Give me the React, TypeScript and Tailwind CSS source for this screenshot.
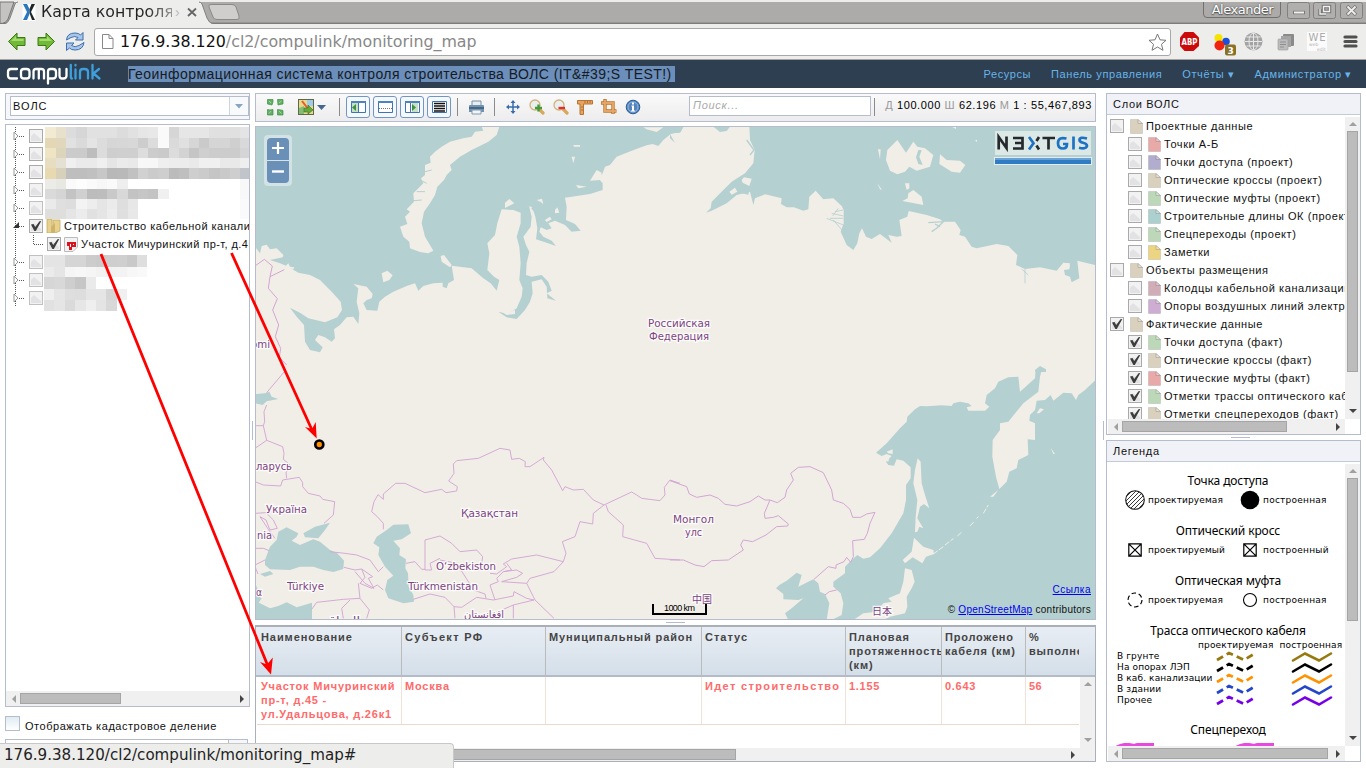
import React from "react";

const UI = "font-['Liberation_Sans',sans-serif]";

/* ---------- small shared parts ---------- */

function Check({ on, faint }: { on?: boolean; faint?: boolean }) {
  return (
    <svg className="shrink-0" width="14" height="14" viewBox="0 0 14 14">
      <rect x=".5" y=".5" width="13" height="13" fill="#f2f2f2" stroke={faint ? "#c0c0c0" : "#a9a9a9"} />
      <path d="M2 12V7L5 4L12 10V12Z" fill="#e2e2e4" />
      {on && <path d="M2 5.500L4.500 5L6.200 8L10.500 2.300L12.300 2L6.800 12H5.400Z" fill="#3c3c3c" />}
    </svg>
  );
}

function FileIcon({ color }: { color: string }) {
  return (
    <svg className="shrink-0" width="13" height="15" viewBox="0 0 13 15">
      <path d="M.5 .5H8L12.500 4.500V14.500H.5Z" fill={color} stroke="#000" strokeOpacity=".1" />
      <path d="M8 .5V4.500H12.500Z" fill="#fff" fillOpacity=".35" stroke="#000" strokeOpacity=".15" />
    </svg>
  );
}

function Tri({ dir, dark }: { dir: "u" | "d" | "l" | "r"; dark?: boolean }) {
  const d = { u: "M0 5L4 1L8 5Z", d: "M0 2L4 6L8 2Z", l: "M6 0V8L2 4Z", r: "M2 0V8L6 4Z" }[dir];
  return (
    <svg className="shrink-0" width="8" height="8" viewBox="0 0 8 8">
      <path d={d} fill={dark ? "#444" : "#a0a0a0"} />
    </svg>
  );
}

/* ---------- browser chrome ---------- */

function TabStrip() {
  return (
    <div className="relative h-6 shrink-0">
      <svg className="absolute inset-0" width="1366" height="24">
        <rect width="1366" height="24" fill="#ededeb" />
        <rect y="2" width="1366" height="21" fill="#acaba9" />
        <rect y="22" width="1366" height="1" fill="#979694" />
        <rect y="23" width="1366" height="1" fill="#7d7c7a" />
        <path d="M0 2H14L8 19Q6 23.500 0 23.500Z" fill="#c4c3c1" stroke="#777" />
        <path d="M5 24Q8 23 10 18L15 4Q16 2 18 2H199Q201 2 202 4L207 18Q209 23 213 24Z" fill="#ededeb" />
        <path d="M5 24Q8 23 10 18L15 4Q16 2 18 2M199 2Q201 2 202 4L207 18Q209 23 213 24" fill="none" stroke="#838280" />
        <path d="M211 4.500H232Q235 4.500 236 7L239 16Q240 19.500 237 19.500H217Q214 19.500 213 17L209 7Q208 4.500 211 4.500Z" fill="#cfcecd" stroke="#8a8987" />
        <rect x="22.500" y="4" width="13" height="17" fill="#fff" />
        <path d="M23 4H27L29.500 9V14L27 20H23L27 12Z" fill="#2878c0" />
        <path d="M35 4H31.500L29.500 9V13L32 20H35L31 12Z" fill="#20252a" />
        <path d="M188 8.500L196 16M196 8.500L188 16" stroke="#666" strokeWidth="1.800" />
        <path d="M1203.500 2V14Q1203.500 17.500 1207 17.500H1277Q1280.500 17.500 1280.500 14V2" fill="none" stroke="#72716f" />
        <g fill="#b0afad" stroke="#81807e">
          <rect x="1287.500" y="2.500" width="22" height="16" rx="2" />
          <rect x="1313.500" y="2.500" width="22" height="16" rx="2" />
          <rect x="1340.500" y="2.500" width="22" height="16" rx="2" />
        </g>
        <g fill="none" stroke="#777" strokeWidth="3.500">
          <path d="M1293 12.500H1305M1347 6L1356 15M1356 6L1347 15" />
          <path d="M1320 9V14H1326M1323.500 6.500H1329.500V11.500H1323.500Z" />
        </g>
        <g fill="none" stroke="#f0efed" strokeWidth="1.800">
          <path d="M1294 12.500H1304M1347.500 6.500L1355.500 14.500M1355.500 6.500L1347.500 14.500" />
          <path strokeWidth="1.300" d="M1320 9V14H1326M1323.500 6.500H1329.500V11.500H1323.500Z" />
        </g>
      </svg>
      <div className="relative flex h-6 items-center pl-[41px]">
        <span className="w-[131px] overflow-hidden whitespace-nowrap bg-gradient-to-r from-[#222] from-80% to-[#999] bg-clip-text font-['DejaVu_Sans',sans-serif] text-[15.800px] leading-[22px] text-transparent">Карта контроля</span>
        <span className="ml-[3px] text-[14px] leading-[20px] text-[#bbb]">›</span>
        <span className="ml-auto mr-[93px] pb-1 font-['DejaVu_Sans',sans-serif] text-[13px] tracking-[-0.5px] text-white [text-shadow:0_0_2px_#444,0_1px_1px_#555]">Alexander</span>
      </div>
    </div>
  );
}

function AddressBar() {
  return (
    <div className="flex h-9 shrink-0 items-center border-b border-[#a3a3a3] bg-[#ededeb]">
      <svg className="shrink-0" width="94" height="35" viewBox="0 24 94 35">
        <g stroke="#3a7a10" strokeLinejoin="round" fill="#72b93a">
          <path d="M8.500 41.500L17 33V37.500H25V45.500H17V50Z" />
          <path d="M54.500 41.500L46 33V37.500H38V45.500H46V50Z" />
        </g>
        <path d="M11 41L16 36V39H23.500V41Z M52 41L47 36V39H39.500V41Z" fill="#a3dc6c" />
        <g fill="#a9c6e8" stroke="#3d6fae" strokeLinejoin="round">
          <path d="M66.500 40Q67 33 75 33Q79 33 80.500 35L83 32.500V40H75.500L78 37.500Q75 35.500 71 37.500Z" />
          <path d="M84 42.500Q83 50 75 50Q71 50 69.500 48L66.500 50.500V43H74L71.500 45.500Q75 48 79 45.500Z" />
        </g>
      </svg>
      <div className="flex h-[28px] w-[1077px] shrink-0 items-center rounded-[3px] border border-[#a8a8a8] bg-white pl-[7px]">
        <svg width="12" height="15" viewBox="0 0 12 15"><path d="M.5.5H7L11 4.500V14.500H.5ZM7 .5V4.500H11" fill="#fff" stroke="#888" /></svg>
        <span className="ml-[6px] font-['DejaVu_Sans',sans-serif] text-[15.850px] leading-[20px] text-[#888]"><span className="text-[#111]">176.9.38.120</span>/cl2/compulink/monitoring_map</span>
        <svg className="ml-auto mr-[3px]" width="19" height="18" viewBox="0 0 19 18"><path d="M9.500 1L12 6.800L18 7.300L13.500 11.300L15 17.300L9.500 14L4 17.300L5.500 11.300L1 7.300L7 6.800Z" fill="#fff" stroke="#777" /></svg>
      </div>
      <svg className="shrink-0" width="195" height="35" viewBox="1171 24 195 35">
        <path d="M1184.500 32H1193.500L1199 37.500V46L1193.500 51H1184.500L1180 46V37.500Z" fill="#cc0a0a" />
        <text x="1181.500" y="45.200" fontFamily="DejaVu Sans" fontSize="9" fontWeight="700" fill="#fff" textLength="16" lengthAdjust="spacingAndGlyphs">ABP</text>
        <circle cx="1226" cy="41.500" r="3.800" fill="#1d50d8" />
        <circle cx="1218.500" cy="38" r="4" fill="#f4e400" />
        <circle cx="1219.500" cy="45.500" r="5" fill="#ee2310" />
        <rect x="1225" y="44.500" width="11" height="11" rx="2" fill="#8a7128" />
        <text x="1227.500" y="53.500" fontFamily="DejaVu Sans" fontSize="9" fontWeight="700" fill="#fff">3</text>
        <circle cx="1253.500" cy="41.500" r="9" fill="#a3a3a3" />
        <g fill="none" stroke="#e8e8e8"><path d="M1253.500 33V50M1245 41.500H1262M1246.500 37H1260.500M1246.500 46H1260.500" /><ellipse cx="1253.500" cy="41.500" rx="4.500" ry="8.500" /></g>
        <rect x="1283" y="34" width="11" height="12" rx="1" fill="#8a8a8a" /><rect x="1281" y="36" width="10" height="11" fill="#a5a5a5" /><rect x="1278" y="39" width="10" height="11" rx="1" fill="#bcbcbc" stroke="#999" strokeWidth=".6" /><path d="M1280 42H1286M1280 44.500H1286M1280 47H1284" stroke="#8f8f8f" />
        <rect x="1307" y="32" width="20" height="19" fill="#fbfbfb" />
        <text x="1308.500" y="41" fontFamily="DejaVu Sans" fontSize="10" fill="#aaa" textLength="17">WE</text>
        <text x="1309" y="46" fontFamily="DejaVu Sans" fontSize="4.500" fill="#b3b3b3">web</text>
        <text x="1317" y="50.500" fontFamily="DejaVu Sans" fontSize="4.500" fill="#b3b3b3">edit</text>
        <path d="M1345 37H1356M1345 41.500H1356M1345 46H1356" stroke="#505050" strokeWidth="3.200" strokeLinecap="round" />
      </svg>
    </div>
  );
}

function AppHeader() {
  return (
    <div className="flex h-7 shrink-0 items-center bg-[#2e3f52] text-[#68b4e8]">
      <svg className="shrink-0" width="122" height="28" viewBox="0 0 122 28" fill="none" strokeWidth="2.300" strokeLinecap="round" strokeLinejoin="round">
        <g stroke="#fff">
          <path d="M17 9H11Q8 9 8 12V15.500Q8 18.500 11 18.500H17" />
          <rect x="21" y="9" width="8.500" height="9.500" rx="2.800" />
          <path d="M33.500 18.500V11.500Q33.500 9 36 9H41.500Q44 9 44 11.500V18.500M38.800 9.500V18.500" />
          <path d="M48 23.500V11.500Q48 9 50.500 9H53Q56 9 56 12V15.500Q56 18.500 53 18.500H49" />
          <path d="M59.500 9V15.500Q59.500 18.500 62 18.500H63.500Q66.500 18.500 66.500 15.500V9" />
        </g>
        <g stroke="#3e9fdb">
          <path d="M70.800 5V16.500Q70.800 18.500 72 18.500M75.500 9.500V18.500M75.500 5V5.500M80 18.500V12Q80 9 83 9H84.500Q88 9 88 12V18.500M92.500 5V18.500M99 9L93.500 13.500L99.500 18.500" />
        </g>
      </svg>
      <span className={`${UI} ml-[6px] h-4 w-[547px] shrink-0 whitespace-nowrap bg-[#6b8eba] text-[14px] leading-4 tracking-[0.440px] text-[#161b22]`}>Геоинформационная система контроля строительства ВОЛС (IT&amp;#39;S TEST!)</span>
      <nav className={`${UI} ml-auto flex gap-5 whitespace-nowrap pr-[14px] text-[11px] tracking-[0.600px]`}>
        <span>Ресурсы</span>
        <span>Панель управления</span>
        <span>Отчёты ▾</span>
        <span>Администратор ▾</span>
      </nav>
    </div>
  );
}

/* ---------- left column ---------- */

const X1 = [135, 167, 197, 228, 260, 291, 320, 351, 383, 413, 444, 474, 506, 536, 566, 598, 628, 660, 690, 720, 750];
const Y1 = [20, 53, 83, 114, 144, 176, 206, 236, 267, 297];
const M1 = [
  "f3ead3 e6e0cd dcdcdc d6d6d6 e1e1e1 e1e1e1 e1e1e1 dcdcdc e1e1e1 e6e6e6 e8e8e8 fafafa d6d6d6 e6e6e6 e6e6e6 e6e6e6 e0e0e0 e0e0e0 e0e0e0 e4e4e4",
  "e3d7b5 e0d7bd e1e1e1 dadada e4e4e4 dcdcdc d6d6d6 d7d7d7 d8d8d8 cdcdcd dcdcdc fafafa dadada e0e0e0 d6d6d6 cacaca d5d5d5 d5d5d5 cfcfcf d9d9d9",
  "efe4c3 ddd4bc cbcbcb cbcbcb bdbdbd dcdcdc cecece cfcfcf cfcfcf dddddd cccccc cacaca dcdcdc d3d3d3 c5c5c5 cfcfcf cccccc cccccc cccccc d5d5d5",
  "e7dec2 e4e0d4 f0f0f0 eaeaea eaeaea efefef e5e5e5 ebebeb e9e9e9 f7f7f7 f7f7f7 efefef ececec ececec e9e9e9 f0f0f0 f0f0f0 e9e9e9 e9e9e9 eeeeee",
  "e8d9b0 d7d0bb bebebe bebebe c0c0c0 c7c7c7 b8b8b8 b9b9b9 c1c1c1 d1d1d1 cbcbcb cecece bbbbbb bfbfbf cecece cbcbcb c5c5c5 c9c9c9 cecece c1c5c9",
  "ebebe7 e8e8e3 fafafa fdfdfd fafafa f7f7f7 fafafa eeeeee ffffff ffffff ffffff ffffff ffffff ffffff ffffff ffffff ffffff ffffff ffffff f8f8f8",
  "dadada d5d5d5 c3c3c3 d0d0d0 bcbcbc bdbdbd c9c9c9 d8d8d8 c3c3c3 c6c6c6 c3c3c3 f0f0f0 ffffff ffffff ffffff ffffff ffffff ffffff ffffff f8f8f8",
  "eaeaea dfdfdf dddddd f3f3f3 ededed e5e5e5 ebebeb dedede e7e7e7 ffffff ffffff ffffff ffffff ffffff ffffff ffffff ffffff ffffff ffffff fafafa",
  "dededc dededc e5e5e5 ececec e1e1e1 e5e5e5 ededed dfdfdf e8e8e8 ffffff ffffff ffffff ffffff ffffff ffffff ffffff ffffff ffffff ffffff fafafa",
];
const X2 = [132, 163, 195, 226, 257, 288, 318, 350, 380, 411, 441];
const Y2 = [405, 440, 472, 506, 540, 572];
const M2 = [
  "e4e4e4 e4e4e4 d5d5d5 d5d5d5 cccccc cacaca cecece cfcfcf c9c9c9 dedede",
  "ebebeb e5e5e5 f5f5f5 f7f7f7 f5f5f5 f2f2f2 f2f2f2 f3f3f3 f7f7f7 f9f9f9",
  "d6d6d6 d8d8d8 cecece c6c6c6 eaeaea ffffff ffffff ffffff ffffff ffffff",
  "efefef e5e5e5 dedede dddddd e5e5e5 e5e5e5 d5d5d5 f0f0f0 ffffff ffffff",
  "e1e1e1 e5e5e5 dadada e6e6e6 efefef e4e4e4 d8d8d8 ffffff ffffff ffffff",
];

function Mosaic({ xs, ys, rows }: { xs: number[]; ys: number[]; rows: string[] }) {
  return (
    <g>
      {rows.map((r, j) => r.split(" ").map((c, i) => (
        <rect key={`${i}-${j}`} x={xs[i]} y={ys[j]} width={xs[i + 1] - xs[i]} height={ys[j + 1] - ys[j]} fill={`#${c}`} shapeRendering="crispEdges" />
      )))}
    </g>
  );
}

function TreeRow({ open, faint }: { open?: boolean; faint?: boolean }) {
  return (
    <div className="flex h-[18px] items-center pl-[7px]">
      <svg className="shrink-0" width="16" height="18" viewBox="0 0 16 18">
        <path d="M2.500 0V18M6 9.500H12" stroke="#555" strokeDasharray="1 1" />
        {open ? <path d="M6 5V11H0Z" fill="#333" /> : <path d="M1 5L5 9L1 13Z" fill="#fff" stroke="#999" />}
      </svg>
      <Check on={open} faint={faint} />
      {open && (
        <>
          <svg className="ml-[3px] shrink-0" width="15" height="14" viewBox="0 0 15 14"><path d="M1 0H6V14H1ZM7 1H14V12L9 14H7Z" fill="#e7d18d" stroke="#c4ab64" strokeWidth=".8" /><path d="M5 8L9 4V14H5Z" fill="#cdb36b" /></svg>
          <span className="ml-[3px] whitespace-nowrap">Строительство кабельной канализации</span>
        </>
      )}
    </div>
  );
}

function LeftColumn() {
  return (
    <div className="flex w-[245px] flex-col">
      <div className="flex h-[27px] shrink-0 border border-[#b5bccb] bg-[#f6f7fa] py-[2px] pl-1">
        <div className="flex h-[20px] flex-1 items-center border border-[#b5bccb] bg-white pl-[2px] tracking-[1px]">ВОЛС
          <div className="ml-auto flex h-full w-[19px] items-center justify-center border-l border-[#cfd5e0] bg-[#f8f9fb]"><svg width="8" height="5"><path d="M0 0H8L4 4.500Z" fill="#88a5c8" /></svg></div>
        </div>
      </div>
      <div className="relative mt-[4px] flex h-[583px] shrink-0 flex-col overflow-hidden border border-[#b5bccb]">
        <div className="flex-1 overflow-hidden pt-[2px] tracking-[0.470px]">
          <TreeRow /><TreeRow /><TreeRow /><TreeRow faint /><TreeRow faint />
          <TreeRow open />
          <div className="flex h-[18px] items-center pl-[7px]">
            <svg className="shrink-0" width="34" height="18"><path d="M2.500 0V18M20.500 0V9.500H30" fill="none" stroke="#555" strokeDasharray="1 1" /></svg>
            <Check on />
            <svg className="ml-[3px] shrink-0" width="14" height="15" viewBox="0 0 14 15"><path d="M.5.5H13.500V10L9 14.500H.5Z" fill="#f2f2f2" stroke="#bbb" /><path d="M3 5H12V10H8V13H5V9H3Z" fill="#d8141c" /><path d="M6 7H7V10H6ZM9 7H10V8H9Z" fill="#fff" /></svg>
            <span className="ml-[3px] whitespace-nowrap tracking-[0.430px]">Участок Мичуринский пр-т, д.45</span>
          </div>
          <TreeRow faint /><TreeRow faint /><TreeRow faint />
        </div>
        <svg className="absolute left-[39px] top-0" width="205" height="190" viewBox="135 15 615 570">
          <Mosaic xs={X1} ys={Y1} rows={M1} />
        </svg>
        <svg className="absolute left-[38px] top-[130px]" width="110" height="56" viewBox="132 405 330 168">
          <Mosaic xs={X2} ys={Y2} rows={M2} />
        </svg>
        <div className="flex h-[15px] shrink-0 items-center bg-[#f0f0f0] pl-1 pr-[3px]">
          <Tri dir="l" />
          <div className="ml-[2px] h-[11px] w-[101px] border border-[#a5a5a5] bg-[#bcbcbc]" />
          <span className="ml-auto flex"><Tri dir="r" dark /></span>
        </div>
      </div>
      <div className="mt-[9px] flex h-[15px] shrink-0 items-center">
        <div className="size-[15px] border border-[#b5bccb] bg-gradient-to-b from-[#dfebf3] to-white" />
        <span className="ml-[5px] mt-1 whitespace-nowrap tracking-[0.540px]">Отображать кадастровое деление</span>
      </div>
      <div className="mt-2 flex h-6 w-[243px] shrink-0 justify-end border border-[#b5bccb]"><div className="w-[19px] border-l border-[#b5bccb] bg-[#f6f7fa]" /></div>
    </div>
  );
}

/* ---------- map ---------- */

const WATER = "#b5d0d0";
const LAND = "#f1eee8";

function Label({ x, y, w, children }: { x: number; y: number; w: number; children: string }) {
  return (
    <text x={x} y={y} textLength={w} lengthAdjust="spacingAndGlyphs" fontFamily="'DejaVu Sans','Noto Sans CJK JP',sans-serif" fontSize="10.500" fill="#7d4382" stroke="#fff" strokeOpacity=".8" strokeWidth="2.500" paintOrder="stroke">{children}</text>
  );
}

function MapView() {
  return (
    <div className="relative h-[494px] shrink-0 overflow-hidden border border-[#b5bccb] bg-[#f1eee8]">
      <svg className="block" width="839" height="492" viewBox="256 127 839 492">
        <g transform="translate(250 120) scale(.33333)">
          <path fill={WATER} d="M15 18H1302L1290 38L1265 40L1240 60L1225 78L1208 72L1190 76L1165 85L1130 98L1100 110L1080 135L1065 140L1058 160L1045 175L1058 190V210L1020 222L945 233L950 260L948 300L975 312L992 332L965 335L945 315L915 302L895 310L905 325L890 330L872 322L868 335L880 350L905 362L918 378L890 368L858 358L862 325L856 290L850 272L838 262L845 290L842 320L820 350L828 375L838 395L830 430L828 465L845 470L875 465L895 485L905 512L890 520L918 542L892 535L890 500L875 478L845 485L848 520L840 545L825 570L800 597L770 592L745 575L775 582L800 565L815 530L818 505L808 480L812 430L808 380L800 350L812 310V278L790 270L755 268L742 310L735 345L712 370L718 400L712 450L732 470L748 480L740 512L722 490L700 475L665 445L605 437L612 480L595 490L590 505L578 500V488L550 490L520 498L505 512L495 490L470 498L430 515L405 530L388 545L382 572L350 570L340 550L350 540L365 535L368 522L350 500L310 492L325 505L320 545L328 580L325 612L310 590L290 592L270 615L252 628L255 655L245 665L225 652L205 645L195 660L218 682L210 697L180 690L165 665L162 615L140 590L120 563L150 578L175 595L225 607L262 592L276 570L272 545L245 515L210 480L180 465L145 458L115 440L90 430L60 420L98 412L100 405L80 385L60 388L50 374L35 378L30 400L15 380Z" />
          <g fill={LAND}>
            <path d="M695 20H748L740 45L715 65L665 90L630 110L600 135L605 150L590 165L582 180L562 200L555 225L540 250L522 275L515 310L525 350L540 375L550 392L535 400L510 396L480 385L478 365L460 350L450 320L472 312L465 290L480 275L470 268L492 245L490 220L520 190L513 175L525 165L525 135L542 128L540 110L555 95L575 80L600 65L640 55L665 50L675 35L700 32Z" />
            <path d="M395 460L412 452L428 466L418 480L400 487ZM765 248L778 237L793 250L765 264ZM572 408L582 405L605 435L600 442L575 425ZM885 300L900 290L905 298L890 306ZM915 270L922 262L928 278L915 280ZM105 440L115 430L120 440L133 442L130 448ZM965 110L975 110L970 130ZM970 75H990V80H972ZM1040 150L1055 158L1050 180L1020 182ZM1180 22H1240L1220 36L1190 28ZM838 258L846 262L842 272ZM860 240L876 236L880 252L872 246ZM978 195L1010 200L985 205Z" />
          </g>
          <path fill={LAND} d="M755 575L770 570L780 577L795 570V582L770 585Z" />
          <path d="M15 438L43 418L67 438L60 470L103 449M60 470L55 505L82 536L68 570L86 615L76 650L92 685L88 712L110 735" fill="none" stroke="#d3a5d3" strokeWidth="3" />
          <path d="M525 215L500 215M515 240L480 243M530 190L510 180M525 155L545 150" stroke={WATER} strokeWidth="3" />
        </g>
        <g transform="translate(670 120) scale(.33333)">
          <path fill={WATER} d="M0 18H40L32 36L0 42ZM0 42L15 68L0 55ZM130 20H180L170 33L150 36ZM200 18H238L240 60L254 90L250 130L225 160L185 185L160 210L125 245L122 265L108 278L125 272L170 250L200 225L240 215L250 255L255 235L285 223L335 235L333 252L350 262L372 262L400 272L415 268L418 230L437 212L460 238L490 235L515 258L521 270V310L512 335L530 375L550 390L562 370L568 340L576 325L588 350L605 357L630 342L665 368L655 345L680 350L695 348L688 300L712 290L716 273L770 285L810 298L820 305L855 305L872 330L868 345L885 350L905 380L920 385L980 372L1015 378L1042 405L1038 435L1065 447L1110 442L1160 452L1180 428L1200 435L1198 448L1182 450L1185 465L1200 470L1205 487L1228 475L1222 422L1275 435V18Z" />
          <path fill={LAND} d="M198 18H236L230 50L205 60ZM652 90L682 60L708 98L730 65L742 80L765 85L790 105L780 140L740 152L718 140L705 155L682 163L660 152L648 120ZM810 103L830 120L870 122L886 135L870 158L845 155L808 132ZM624 88L632 88L630 118ZM622 190L636 210L630 208ZM705 190H718V205L710 210ZM697 243L713 235L715 220L730 210L755 230L760 255L725 248ZM1178 428L1200 430L1195 445ZM845 20H858V27ZM915 60H921V67ZM1050 382L1055 390ZM1068 385L1085 395Z" />
          <path fill="none" stroke={WATER} strokeWidth="4" d="M775 308L820 305L800 325L785 335M795 312L810 320M230 60L252 90L240 105" />
          <path fill={WATER} d="M745 90H755L748 110L758 135L745 132L738 112Z" />
          <path fill="none" stroke={WATER} strokeWidth="2.500" d="M1065 447V490M1055 447L1075 465M470 295L520 315M485 280L520 288M495 275L520 270M490 300L520 335M480 295H520M488 288L505 265" />
          <path fill={WATER} d="M200 200L215 195L240 205L235 224L215 220ZM1095 750L1110 738L1128 748V756H1096Z" />
          <path fill={LAND} d="M215 180L222 172L245 176L238 198L218 188ZM178 215L195 203L202 215L185 224Z" />
        </g>
        <g transform="translate(250 370) scale(.33333)">
          <path fill={WATER} d="M15 72L45 70L58 65L65 80L85 87L50 94L38 105L15 100ZM45 570L60 530L80 510L85 485L110 472L145 490L140 500L125 512L150 525L190 508L210 515L240 540L262 550L282 572L280 597L250 606L220 600L190 590L150 590L120 600L60 598L45 585ZM160 490L195 470L240 458L225 480L205 505L165 502ZM410 480L430 464L475 463L483 490L455 508L430 512L450 535L448 555L468 568L466 595L474 610L476 650L490 675L492 695L460 700L415 685L405 660L412 630L430 617L405 590L385 555L388 532L370 520L380 500ZM30 612L60 603L70 612L45 620ZM15 692L60 715L85 708L110 697L140 712L186 698V747H15ZM15 640L22 655L18 675L35 685L25 700L15 695Z" />
          <g fill="none" stroke="#d3a5d3" strokeWidth="2.800" strokeLinejoin="round">
            <path d="M104 4L50 68M50 105L42 125L44 155L40 167H15M40 167L50 211L15 235V245M50 211L98 230L102 250L100 268L115 280L125 292L108 306L110 325M15 335L40 345L92 348L98 330L148 322L158 338V350L175 370L210 378L218 388L254 395L250 435L222 460M15 430L48 428L70 450L82 475L60 480L48 450L30 440L55 478L75 505M15 535H40L58 542M15 585L45 570M24 612L15 590M240 545L285 550L320 555L360 570L385 605L400 590M282 592L315 600L335 597L368 620L355 625L372 655L345 640L315 605M335 597L345 622L330 640L365 655L382 645L400 660M325 640L330 685L280 688L200 697L185 718M330 685L358 720L350 745M300 690L275 715L280 745M400 478L400 460L382 440L365 425L372 395L384 374L400 388V372L437 340L465 340L525 368L575 358L588 368L620 363L622 350L596 333L612 310L610 282L620 272L685 265L750 235L780 240L785 268L808 265L826 275L825 290L840 290L882 262L880 270L905 300L938 362L945 350L970 360L1000 358L1030 390L1062 405L1145 366L1160 375L1175 385L1230 392L1245 375L1243 352L1260 330L1290 340M1062 405L1030 430L1028 462L990 455L975 500L937 515L948 550L940 575L860 555L785 567L760 582L770 590L740 612L720 610M1068 405L1075 425L1120 465L1118 500L1190 520L1215 565L1290 570M940 575L912 605L840 625L830 640L850 680L855 690L912 745M525 600V510L570 498L605 520L630 545L680 540L698 560L695 580M525 600H545L540 580L570 565M468 580L495 575L515 598H525M490 688L540 672L585 682L612 710L615 745M612 710L635 712L680 682L730 690L790 678M570 570L620 580L655 635L670 660L705 672L708 685M720 645L735 690M720 645L745 635L740 625L760 605L785 600L770 580M760 605L800 600L818 610L800 622L755 635L830 640M790 678L792 665L830 685L852 690L790 705V745M790 705L760 718L730 745" />
          </g>
        </g>
        <g transform="translate(670 370) scale(.33333)">
          <path fill={WATER} d="M1277 30L1245 60L1225 75L1218 90L1205 70L1180 68L1150 92L1142 75L1125 90L1100 92L1095 120L1080 135L1078 152L1095 160V210L1073 208L1075 255L1045 270L1040 295L1018 305L1010 335L988 357L978 320L967 260L968 210L990 180L990 160L1015 155L1060 100L1105 65L1110 20L1115 0H1097L1095 25L1050 65L1045 20L1015 22L985 35L975 55L950 75L945 100L958 110L945 122L895 122L890 112L905 108L895 100L870 95L850 100L845 108L815 106L770 109L750 108L735 118L712 140L710 155L690 175L650 220L618 248L635 258L650 252L665 258L648 275L655 285L672 287L680 268L700 272L722 292V325L708 345V390L700 430L665 490L630 535L600 562L580 566L562 555L545 570L525 590V610L490 635V650L512 670L520 700L515 735L485 750H1277ZM470 750L478 700L465 672L450 665L445 640L430 628L385 650L395 615L380 608L350 632L328 645L318 655L340 672V688L385 690L400 685L365 715L345 730L355 750Z" />
          <path fill={LAND} d="M743 265L752 275L755 340L765 375L778 415L762 402L750 410L742 445L760 475L748 470L742 485L735 487L737 440L742 390L730 340L735 300ZM732 503L760 530L790 540L792 552L768 560L757 580L728 562L705 580L698 570L725 545ZM705 595L725 600L734 635L725 655L710 680L712 710L705 730L660 740L640 750H550L580 730L620 725L640 700L665 695L655 685L690 670L700 635ZM1100 130L1110 115L1122 118L1108 130ZM1142 233L1155 252L1150 252ZM960 380L985 360L970 380ZM1255 303L1268 306ZM650 245L668 238V252L655 250ZM640 270L658 262L655 275Z" />
          <path d="M790 552L820 530M825 525L850 506M862 498L878 484M900 468L912 455M940 430L955 405M920 445L925 440" stroke={LAND} strokeWidth="3" strokeDasharray="16 5" />
          <g fill="none" stroke="#d3a5d3" strokeWidth="3" strokeLinejoin="round">
            <path d="M0 332L50 350L58 372L80 382L120 375L145 385L165 403L200 408L240 395L265 378L285 390H300L322 398L345 382L350 360L370 330L362 310L385 292L420 290L460 308L485 360L490 390L520 400L540 418L548 442H572L590 432L615 427L600 460L592 490L583 508L548 512L550 560L542 577L530 562L522 575L498 585V595L475 590L432 628M300 390L283 430L285 445L310 442L325 437L355 462L353 468L320 470L288 495L248 515L220 510L212 525L220 540L175 570L125 572L102 590L75 585L40 570H0M465 675L478 665L500 660" />
          </g>
        </g>
        <Label x={648} y={327} w={62}>Российская</Label>
        <Label x={649} y={340} w={60}>Федерация</Label>
        <Label x={251} y={348} w={19}>omi</Label>
        <Label x={256} y={470} w={36}>ларусь</Label>
        <Label x={266} y={513} w={41}>Україна</Label>
        <Label x={257} y={539} w={15}>nia</Label>
        <Label x={461} y={517} w={57}>Қазақстан</Label>
        <Label x={436} y={570} w={60}>O‘zbekiston</Label>
        <Label x={408} y={590} w={70}>Türkmenistan</Label>
        <Label x={287} y={590} w={37}>Türkiye</Label>
        <Label x={256} y={596} w={6}>α</Label>
        <Label x={464} y={618} w={40}>افغانستان</Label>
        <Label x={673} y={523} w={41}>Монгол</Label>
        <Label x={685} y={536} w={17}>улс</Label>
        <Label x={692} y={603} w={20}>中国</Label>
        <Label x={872} y={615} w={20}>日本</Label>
        <Label x={326} y={624} w={34}>العراق</Label>
        <path d="M653 604V614H706V604" fill="none" stroke="#000" strokeWidth="2" />
        <text x="664" y="611" fontFamily="Liberation Sans" fontSize="9" textLength="31">1000 km</text>
        <circle cx="319.300" cy="444.500" r="4" fill="#ff9000" stroke="#000" strokeWidth="2.700" />
        <rect x="995" y="131" width="96" height="24" fill="#dbe8e6" />
        <g fill="none" strokeWidth="2.700">
          <path d="M998.700 149.500V137L1006.500 148V136.500M1013 138H1022.500V148.500H1013M1015 143H1022M1042.500 138H1055M1048.500 138V149.500" stroke="#25282c" />
          <path d="M1039 137L1036.500 141M1039 149.500L1036.500 145.500" stroke="#25282c" />
          <path d="M1029 137L1033.500 143.200L1029 149.500M1066.500 138.500Q1058 136.500 1058 143.200Q1058 148.500 1063 148.500Q1067 148.500 1067 144H1063M1073.500 136.500V149.500M1087 138.500Q1079.500 136.500 1079.500 140Q1079.500 142 1083 142.700Q1087 143.500 1087 146Q1086 149.500 1079 147.700" stroke="#1e72c4" />
        </g>
        <rect x="994.500" y="157.500" width="97" height="7" fill="#2f7cc4" stroke="#e3ecf0" />
        <rect x="995" y="158" width="96" height="2" fill="#69a1d4" />
      </svg>
      <div className="absolute left-2 top-2 flex w-7 flex-col gap-px rounded bg-[#d3e2e4] p-[3px]">
        <div className="flex h-[22px] items-center justify-center rounded-t bg-[#6b90b8]"><svg className="-mt-0.5" width="12" height="12"><path d="M6 0V12M0 6H12" stroke="#fff" strokeWidth="2.200" /></svg></div>
        <div className="flex h-[22px] items-center justify-center rounded-b bg-[#6b90b8]"><svg className="-mt-0.5" width="12" height="3"><path d="M0 1.500H12" stroke="#fff" strokeWidth="2.400" /></svg></div>
      </div>
      <span className="absolute right-1 top-[457px] text-[10px] leading-[12px] tracking-[0.500px] text-[#0000ee] underline">Ссылка</span>
      <span className="absolute bottom-[2px] right-[4px] whitespace-nowrap text-[10px] leading-[14px] tracking-[0.270px]">© <span className="text-[#0000ee] underline">OpenStreetMap</span> contributors</span>
    </div>
  );
}

function ToolBtn({ children }: { children: React.ReactNode }) {
  return <div className="mr-[3px] flex h-[22px] w-[24px] shrink-0 items-center justify-center rounded-[3px] border border-[#7196c4] bg-[#f5f9fe]">{children}</div>;
}

function Sep() {
  return <div className="h-[18px] w-px shrink-0 bg-[#8b8b8b]" />;
}

function Magnifier({ plus }: { plus?: boolean }) {
  return (
    <svg className="shrink-0" width="16" height="16" viewBox="0 0 16 16">
      <path d="M9 9L14 14" stroke="#d9a860" strokeWidth="3.200" strokeLinecap="round" />
      <circle cx="6" cy="6" r="5" fill="#e9eef1" stroke="#d3b27c" strokeWidth="1.300" />
      <path d={plus ? "M9.500 5.500V12.500M6 9H13" : "M5.500 9H12"} stroke={plus ? "#429b38" : "#e32d2d"} strokeWidth="2.400" />
    </svg>
  );
}

function MapToolbar() {
  return (
    <div className="flex h-[29px] shrink-0 items-center border border-[#b5bccb] bg-gradient-to-b from-[#fafafa] to-[#ececee] pb-px pl-[11px]">
      <svg className="shrink-0" width="17" height="17" viewBox="0 0 17 17" fill="#63b066" stroke="#3e8e43" strokeWidth=".7">
        <path d="M.5.5H6V3L5 6L3 5.500L.5 5ZM10.500.5H16V5L13 5.500L11 6ZM.5 10.500L3 11L6 10.500V16H.5ZM10.500 10.500L14 11L16 11.500V16H10.500Z" />
        <path d="M2 2L4 4M14.500 2L12 4M2 14.500L4 12M14.500 14.500L12 12" stroke="#b9e2ba" />
      </svg>
      <svg className="ml-[14px] shrink-0" width="16" height="16" viewBox="0 0 16 16"><rect x=".5" y=".5" width="15" height="15" fill="#e9d98c" stroke="#5a6a4a" /><path d="M1 9L6 7V15H1Z" fill="#84bd72" /><path d="M9 1H15V7H9Z" fill="#9fcbe8" /><path d="M4 2L11 11" stroke="#e55c28" strokeWidth="2" /><path d="M6 9H10V6L15 11L10 15V13H6Z" fill="#63a83c" stroke="#396d24" strokeWidth=".6" /></svg>
      <svg className="ml-[3px] shrink-0" width="9" height="5"><path d="M0 0H9L4.500 5Z" fill="#45688c" /></svg>
      <span className="ml-[13px] mr-[6px] flex"><Sep /></span>
      <ToolBtn><svg width="15" height="12" viewBox="0 0 15 12"><path d="M.5.5H14.500V11.500H.5Z" fill="#fff" stroke="#3d74b4" /><rect x="1" y="1" width="6" height="10" fill="#c8e0c5" /><rect width="15" height="2" fill="#4d83be" /><path d="M1 6.500L5 3V10Z" fill="#3d9440" /><path d="M7.500 2V12" stroke="#3d74b4" /></svg></ToolBtn>
      <ToolBtn><svg width="15" height="12" viewBox="0 0 15 12"><path d="M.5.5H14.500V11.500H.5Z" fill="#fff" stroke="#3d74b4" /><rect width="15" height="2" fill="#4d83be" /><path d="M1 7.500H14" stroke="#777" strokeDasharray="1 1" /></svg></ToolBtn>
      <ToolBtn><svg width="15" height="12" viewBox="0 0 15 12"><path d="M.5.5H14.500V11.500H.5Z" fill="#fff" stroke="#3d74b4" /><rect x="7" y="1" width="6" height="10" fill="#c8e0c5" /><rect width="15" height="2" fill="#4d83be" /><path d="M11 6.500L7 3V10Z" fill="#3d9440" /><path d="M5.500 2V12" stroke="#3d74b4" /></svg></ToolBtn>
      <ToolBtn><svg width="15" height="12" viewBox="0 0 15 12"><path d="M.5.5H14.500V11.500H.5Z" fill="#fff" stroke="#3d74b4" /><path d="M2 2.500H13M2 5H13M2 7.500H13M2 10H13" stroke="#111" strokeWidth="1.300" /></svg></ToolBtn>
      <span className="ml-[3px] flex"><Sep /></span>
      <svg className="ml-[10px] shrink-0" width="17" height="15" viewBox="0 0 17 15"><path d="M4 1H13V6H4Z" fill="#e8edf2" stroke="#7890a5" /><path d="M1 6Q1 5 2 5H15Q16 5 16 6V12H1Z" fill="#6f93b0" /><path d="M1 8H16" stroke="#375a76" strokeWidth="1.500" /><path d="M4 10H13V14H4Z" fill="#f2f5f8" stroke="#8499ab" /></svg>
      <span className="ml-[9px] flex"><Sep /></span>
      <svg className="ml-[11px] shrink-0" width="14" height="14" viewBox="0 0 14 14"><path d="M7 1V13M1 7H13" stroke="#3a6cab" strokeWidth="1.500" /><path d="M7 0L9.500 3H4.500ZM7 14L9.500 11H4.500ZM0 7L3 4.500V9.500ZM14 7L11 4.500V9.500Z" fill="#3a6cab" /></svg>
      <span className="ml-[9px] flex shrink-0 gap-2">
        <Magnifier plus />
        <Magnifier />
        <svg width="16" height="16" viewBox="0 0 16 16"><path d="M.5 1.500H15.500V5H6.500V15.500H3V5H.5Z" fill="#e5a464" stroke="#b9752e" /><path d="M8 2V4M10.500 2V4M13 2V4M4 8H6M4 11H6" stroke="#8d5c25" strokeWidth=".7" /></svg>
        <svg width="16" height="16" viewBox="0 0 16 16"><path d="M0 4H12V15M4 0V12H15.500" fill="none" stroke="#b9752e" strokeWidth="3.400" /><path d="M.7 4H12V14.500M4 .7V12H15" fill="none" stroke="#e5a464" strokeWidth="2" /></svg>
        <svg width="16" height="16" viewBox="0 0 16 16"><circle cx="8" cy="8" r="6.800" fill="#5284be" stroke="#2b5c98" /><circle cx="8" cy="8" r="5" fill="none" stroke="#a7c3e3" strokeWidth=".8" /><path d="M7 3.500H9V5.500H7ZM6.500 6.500H9V11.500H10V12.500H6V11.500H7V7.500H6.500Z" fill="#fff" /></svg>
      </span>
      <div className="mb-[2px] ml-[48px] h-5 w-[182px] shrink-0 border border-[#b5bccb] bg-white pl-[3px] text-[11px] italic leading-[17px] tracking-[0.700px] text-[#aaa]">Поиск...</div>
      <span className="ml-[3px] flex"><Sep /></span>
      <div className="ml-auto whitespace-nowrap pb-[4px] pr-[3px] tracking-[0.600px] text-black"><span className="text-[#999]">Д</span> 100.000 <span className="text-[#999]">Ш</span> 62.196 <span className="text-[#999]">М</span> 1 : 55,467,893</div>
    </div>
  );
}

const COLS: [string, string][] = [
  ["Наименование", "tracking-[0.930px]"],
  ["Субъект РФ", "tracking-[1.300px]"],
  ["Муниципальный район", "tracking-[0.860px]"],
  ["Статус", "tracking-[1px]"],
  ["Плановая протяженность (км)", "tracking-[0.900px]"],
  ["Проложено кабеля (км)", "tracking-[0.800px]"],
  ["% выполнения", "tracking-[0.800px]"],
];
const VALS: [string, string][] = [
  ["Участок Мичуринский пр-т, д.45 - ул.Удальцова, д.26к1", "tracking-[0.780px]"],
  ["Москва", "tracking-[0.800px]"],
  ["", ""],
  ["Идет строительство", "tracking-[1.350px]"],
  ["1.155", "tracking-[0.700px]"],
  ["0.643", "tracking-[0.700px]"],
  ["56", "tracking-[0.500px]"],
];
const GRID = "grid w-[822px] shrink-0 grid-cols-[145px_144px_156px_144px_96px_84px_53px] overflow-hidden";

function DataGrid() {
  return (
    <div className="flex h-[137px] shrink-0 flex-col overflow-hidden border border-t-2 border-[#a9b0ba] bg-white text-[11px] font-bold leading-[14px]">
      <div className="flex h-[50px] shrink-0 border-b-2 border-[#b3bcc6] bg-gradient-to-b from-[#e8edf4] to-[#d4dfe9] pl-px text-[#444]">
        <div className={GRID}>
          {COLS.map(([c, t], i) => <div key={c} className={`overflow-hidden pt-[3px] ${t} ${i < 6 ? "border-r border-[#bbb]" : ""} ${i === 0 ? "pl-[4px]" : "pl-[3px]"}`}>{c}</div>)}
        </div>
      </div>
      <div className="flex h-[71px] shrink-0 pl-px">
        <div className={`${GRID} h-[48px] border-b border-[#ecd9cc]`}>
          {VALS.map(([c, t], i) => <div key={i} className={`overflow-hidden pt-[2px] text-[#ff6a6a] ${t} ${i < 6 ? "border-r border-[#f0e2d6]" : ""} ${i === 0 ? "pl-[4px]" : "pl-[3px]"}`}>{c}</div>)}
        </div>
        <div className="ml-auto flex w-[15px] shrink-0 flex-col items-center justify-between bg-[#f0f0f0] py-1"><Tri dir="u" /><Tri dir="d" /></div>
      </div>
      <div className="flex h-[14px] items-center bg-[#f0f0f0]">
        <div className="h-[11px] w-[480px] border border-[#a5a5a5] bg-[#bcbcbc]" />
        <span className="ml-auto mr-[18px] flex"><Tri dir="r" dark /></span>
      </div>
    </div>
  );
}

/* ---------- right column ---------- */

const LAYERS: [number, boolean, string, string][] = [
  [0, false, "#d9d0bd", "Проектные данные"],
  [1, false, "#e7aaa9", "Точки А-Б"],
  [1, false, "#b1adcf", "Точки доступа (проект)"],
  [1, false, "#d9d0bd", "Оптические кроссы (проект)"],
  [1, false, "#bcd8b9", "Оптические муфты (проект)"],
  [1, false, "#abd0cd", "Строительные длины ОК (проект)"],
  [1, false, "#bcd8b9", "Спецпереходы (проект)"],
  [1, false, "#ecd482", "Заметки"],
  [0, false, "#d9d0bd", "Объекты размещения"],
  [1, false, "#d0adb7", "Колодцы кабельной канализации"],
  [1, false, "#cdaed2", "Опоры воздушных линий электропередач"],
  [0, true, "#d9d0bd", "Фактические данные"],
  [1, true, "#bcd8b9", "Точки доступа (факт)"],
  [1, true, "#d9d0bd", "Оптические кроссы (факт)"],
  [1, true, "#e7aaa9", "Оптические муфты (факт)"],
  [1, true, "#bcd8b9", "Отметки трассы оптического кабеля"],
  [1, true, "#d9d0bd", "Отметки спецпереходов (факт)"],
];

function Panel({ title, thumbH, thumbW, children }: { title: string; thumbH: string; thumbW: string; children: React.ReactNode }) {
  return (
    <>
      <div className="h-[21px] shrink-0 border-b border-[#c4cbd8] bg-[#f1f2f8] pl-[6px] leading-[20px] tracking-[0.700px]">{title}</div>
      <div className="mt-[2px] flex min-h-0 flex-1 pl-[1px]">
        <div className="w-[237px] overflow-hidden">{children}</div>
        <div className="flex w-[15px] flex-col items-center bg-[#f0f0f0] py-1">
          <Tri dir="u" />
          <div className={`mt-[2px] w-[11px] shrink-0 border border-[#a5a5a5] bg-[#bcbcbc] ${thumbH}`} />
          <span className="mt-auto"><Tri dir="d" dark /></span>
        </div>
      </div>
      <div className="ml-[1px] flex h-[15px] w-[237px] shrink-0 items-center bg-[#f0f0f0] pl-1 pr-[3px]">
        <Tri dir="l" />
        <div className={`ml-[2px] h-[11px] border border-[#a5a5a5] bg-[#bcbcbc] ${thumbW}`} />
        <span className="ml-auto"><Tri dir="r" dark /></span>
      </div>
    </>
  );
}

const LT = "h-[19px] pl-[3px] text-center font-['Noto_Sans',sans-serif] text-[12px] leading-[19px] tracking-[-0.100px]";
const LS = "font-['DejaVu_Sans',sans-serif] text-[9px] whitespace-nowrap";

function LegendPair({ a, b, ta, tb }: { a: React.ReactNode; b: React.ReactNode; ta: string; tb: string }) {
  return (
    <div className={`${LS} flex h-[20px] items-center pl-[17px]`}>
      <span className="flex w-[20px] shrink-0 justify-center">{a}</span>
      <span className="w-[95px] shrink-0 pl-[3px] tracking-[0.120px]">{ta}</span>
      <span className="flex w-[20px] shrink-0 justify-center">{b}</span>
      <span className="pl-[3px] tracking-[0.250px]">{tb}</span>
    </div>
  );
}

function BoxX() {
  return <svg width="14" height="14"><path d="M.8.8H13.200V13.200H.8ZM.8.8L13.200 13.200M13.200.8L.8 13.200" fill="none" stroke="#000" strokeWidth="1.200" /></svg>;
}

const ROUTES = [["В грунте", "#97790f"], ["На опорах ЛЭП", "#000000"], ["В каб. канализации", "#ff9200"], ["В здании", "#2446c8"], ["Прочее", "#7600e8"]];

function Legend() {
  return (
    <div className="pt-[7px] text-black">
      <div className={LT}>Точка доступа</div>
      <LegendPair ta="проектируемая" tb="построенная"
        a={<svg width="20" height="20"><defs><clipPath id="dot"><circle cx="10" cy="10" r="9" /></clipPath></defs><path clipPath="url(#dot)" d="M-4 12L12 -4M-1 13L15 -3M1 15L17 -1M2 18L18 2M4 20L20 4M7 21L22 6M10 22L23 9M-5 9L9 -5" stroke="#222" strokeWidth=".9" /><circle cx="10" cy="10" r="9.300" fill="none" stroke="#111" strokeWidth="1.100" /></svg>}
        b={<svg width="20" height="20"><circle cx="10" cy="10" r="9.300" /></svg>} />
      <div className={`${LT} mt-[11px]`}>Оптический кросс</div>
      <LegendPair ta="проектируемый" tb="построенный" a={<BoxX />} b={<BoxX />} />
      <div className={`${LT} mt-[11px]`}>Оптическая муфта</div>
      <LegendPair ta="проектируемая" tb="построенная"
        a={<svg width="16" height="16"><circle cx="8" cy="8" r="7" fill="none" stroke="#000" strokeWidth="1.200" strokeDasharray="4.500 2.830" /></svg>}
        b={<svg width="16" height="16"><circle cx="8" cy="8" r="6.500" fill="none" stroke="#000" strokeWidth="1.100" /></svg>} />
      <div className={`${LT} mt-[11px]`}>Трасса оптического кабеля</div>
      <div className={`${LS} ml-[90px] mt-[2px] flex h-[7px] items-center gap-[6px] leading-[7px] tracking-[0.160px]`}><span>проектируемая</span><span>построенная</span></div>
      <div className="pt-[2px]">
        {ROUTES.map(([n, c]) => (
          <div key={n} className={`${LS} grid h-[11px] grid-cols-[99px_76px_60px] items-center pl-[9px] leading-[11px] tracking-[0.120px]`}>
            <span>{n}</span>
            <svg className="overflow-visible" width="40" height="10" viewBox="0 0 40 10"><path d="M1 8L13 1L28 8L38 2" fill="none" stroke={c} strokeWidth="2.800" strokeDasharray="7 4.200" /></svg>
            <svg className="overflow-visible" width="40" height="10" viewBox="0 0 40 10"><path d="M1 8.500L13 1.500L27 8.500L39 1.500" fill="none" stroke={c} strokeWidth="2.600" strokeLinecap="round" /></svg>
          </div>
        ))}
      </div>
      <div className={`${LT} mt-[14px]`}>Спецпереход</div>
      <div className={`${LS} flex items-start pl-[8px] pt-[4px]`}>
        <svg className="shrink-0" width="38" height="14"><path d="M0 5Q8 0 18 3Q26 0 38 2" fill="none" stroke="#e648e0" strokeWidth="4" /></svg>
        <span className="w-[82px] shrink-0">проектируемый</span>
        <svg className="shrink-0" width="38" height="14"><path d="M0 5Q8 0 18 3Q26 0 38 2" fill="none" stroke="#e648e0" strokeWidth="4" /></svg>
        <span className="pl-[5px]">построенный</span>
      </div>
    </div>
  );
}

function RightColumn() {
  return (
    <div className="flex w-[255px] flex-col">
      <div className="flex h-[342px] shrink-0 flex-col border border-[#b5bccb]">
        <Panel title="Слои ВОЛС" thumbH="h-[241px]" thumbW="w-[165px]">
          {LAYERS.map(([lvl, on, color, name], i) => (
            <div key={i} className={`flex h-[18px] items-center whitespace-nowrap tracking-[0.560px] ${lvl ? "pl-5" : "pl-[2px]"}`}>
              <Check on={on} />
              <span className="ml-[6px] mr-[3px] flex"><FileIcon color={color} /></span>
              {name}
            </div>
          ))}
        </Panel>
      </div>
      <div className="mx-auto my-[2px] h-px w-[19px] translate-x-[7px] bg-[#b5bccb]" />
      <div className="flex h-[322px] shrink-0 flex-col border border-[#b5bccb]">
        <Panel title="Легенда" thumbH="h-[143px]" thumbW="w-[206px]"><Legend /></Panel>
      </div>
    </div>
  );
}

/* ---------- page ---------- */

function Arrows() {
  return (
    <svg className="pointer-events-none absolute inset-0" width="1366" height="768" fill="#fe0000">
      <path d="M101 254L267.500 665M231.500 253L312 430" stroke="#fe0000" strokeWidth="2.800" />
      <path d="M271 674.500L260 662L267 664.500L272.800 657.500Z" />
      <path d="M316.700 438.500L305 427L312 429L315.700 422Z" />
    </svg>
  );
}

export default function App() {
  return (
    <div className={`${UI} relative flex h-[768px] w-[1366px] flex-col overflow-hidden bg-white text-[11px] leading-[14px] text-[#111]`}>
      <TabStrip />
      <AddressBar />
      <AppHeader />
      <div className="flex h-[680px] pl-[5px] pt-[5px]">
        <LeftColumn />
        <div className="ml-[2px] mr-[2px] mt-[328px] h-[19px] w-px self-start bg-[#b5bccb]" />
        <div className="flex w-[841px] shrink-0 flex-col">
          <MapToolbar />
          <div className="h-1 shrink-0" />
          <MapView />
          <div className="mx-auto my-[2px] h-px w-[19px] shrink-0 bg-[#b5bccb]" />
          <DataGrid />
        </div>
        <div className="ml-[7px] mr-[2px] mt-[328px] h-[19px] w-px self-start bg-[#b5bccb]" />
        <RightColumn />
      </div>
      <Arrows />
      <div className="absolute bottom-0 left-0 h-[25px] w-[454px] rounded-tr border-r border-t border-[#c8c8c8] bg-[#ededeb] pl-1 font-['DejaVu_Sans',sans-serif] text-[15.100px] leading-[23px] text-[#222]">176.9.38.120/cl2/compulink/monitoring_map#</div>
    </div>
  );
}
